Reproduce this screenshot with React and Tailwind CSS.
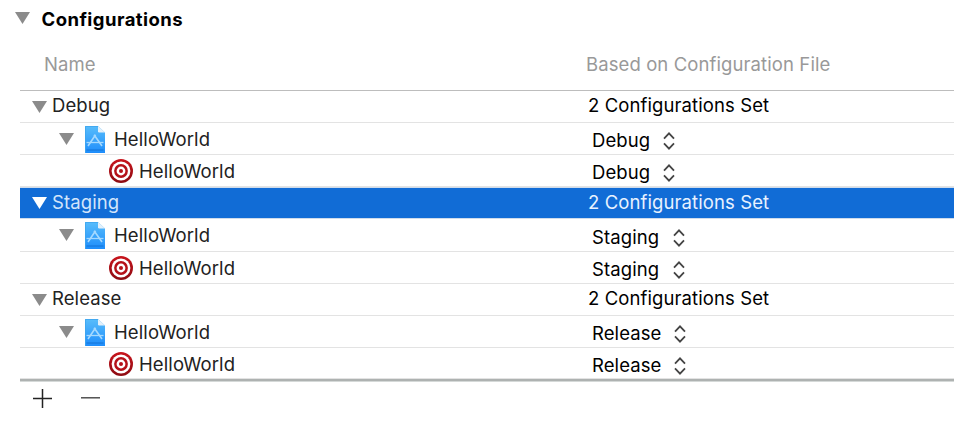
import React from "react";

function Triangle({ className }) {
  return (
    <svg className={`block h-3 w-[15px] shrink-0 ${className}`} viewBox="0 0 15 12" fill="currentColor">
      <path d="M0 0H15L7.5 12Z" />
    </svg>
  );
}

function ProjectIcon() {
  return (
    <svg className="block h-[27px] w-5 shrink-0" viewBox="0 0 20 27">
      <defs>
        <linearGradient id="page" x1="0" y1="0" x2="0" y2="1">
          <stop offset="0" stopColor="#58bdfb" />
          <stop offset="1" stopColor="#1e8dfb" />
        </linearGradient>
      </defs>
      <path d="M0 0H13L20 6.5V27H0Z" fill="url(#page)" />
      <path d="M0.5 27V0.5H13" fill="none" stroke="#3ea5ee" strokeWidth="0.8" />
      <path d="M13 0L20 6.5H14.2Q13 6.5 13 5.2Z" fill="#e3f0fa" />
      <path d="M1.5 24H18.5" stroke="#1272d6" strokeWidth="1" />
      <g stroke="#a5d9ff" fill="none">
        <path d="M3 20L10.6 8.8M9 8.8L17 20" strokeWidth="1.6" />
        <path d="M1.5 16.5H18.5" strokeWidth="1.3" />
      </g>
    </svg>
  );
}

function TargetIcon() {
  return (
    <svg className="block h-6 w-6 shrink-0" viewBox="0 0 24 24">
      <defs>
        <linearGradient id="ring" x1="0" y1="0" x2="0" y2="1">
          <stop offset="0" stopColor="#c9151d" />
          <stop offset="1" stopColor="#8c0b12" />
        </linearGradient>
      </defs>
      <circle cx="12" cy="12" r="12" fill="url(#ring)" />
      <circle cx="12" cy="12" r="9.4" fill="#fff" />
      <circle cx="12" cy="12" r="6.9" fill="#b51119" />
      <circle cx="12" cy="12" r="4.4" fill="#fff" />
      <circle cx="12" cy="12" r="2" fill="#b51119" />
    </svg>
  );
}

function Stepper() {
  return (
    <svg className="block h-[18px] w-3 shrink-0" viewBox="0 0 12 18" fill="none" stroke="#444" strokeWidth="1.8">
      <path d="M1 6.6L6 1.4L11 6.6M1 11.4L6 16.6L11 11.4" />
    </svg>
  );
}

const rows = [
  { kind: "group", name: "Debug", h: "h-8" },
  { kind: "project", name: "HelloWorld", value: "Debug", h: "h-8", place: "gap-[13px] pt-[5px]" },
  { kind: "target", name: "HelloWorld", value: "Debug", h: "h-8", place: "gap-[13px] pt-[5px]" },
  { kind: "group", name: "Staging", selected: true },
  { kind: "project", name: "HelloWorld", value: "Staging", h: "h-[33px]", place: "gap-[14px] pt-1.5" },
  { kind: "target", name: "HelloWorld", value: "Staging", h: "h-8", place: "gap-[14px] pt-[5px]" },
  { kind: "group", name: "Release", h: "h-8" },
  { kind: "project", name: "HelloWorld", value: "Release", h: "h-8", place: "gap-3 pt-[5px]" },
  { kind: "target", name: "HelloWorld", value: "Release", h: "h-[31px]", place: "gap-3 pt-[5px]" },
];

function NameCell({ row }) {
  if (row.kind === "group") {
    return (
      <div className="flex w-[568px] shrink-0 items-start pl-3">
        <Triangle className={row.selected ? "mt-[9px] text-white" : "mt-[10px] text-[#8b8b8b]"} />
        <span className={`ml-[5px] mt-0.5 ${row.selected ? "text-[#d3e5fb]" : "text-[#222]"}`}>{row.name}</span>
      </div>
    );
  }
  if (row.kind === "project") {
    return (
      <div className="flex w-[568px] shrink-0 items-start pl-[39px]">
        <Triangle className="mt-[10px] text-[#8b8b8b]" />
        <div className="ml-[11px] mt-[3px]">
          <ProjectIcon />
        </div>
        <span className="ml-[9px] mt-1 text-[#222]">{row.name}</span>
      </div>
    );
  }
  return (
    <div className="flex w-[568px] shrink-0 items-start pl-[89px]">
      <div className="mt-1">
        <TargetIcon />
      </div>
      <span className="ml-[6px] mt-1 text-[#222]">{row.name}</span>
    </div>
  );
}

function Row({ row }) {
  const tone = row.selected
    ? "h-8 border-t border-b border-t-[#cfdcec] border-b-[#cfdcec] bg-[#116cd6]"
    : `border-b border-[#e3e3e3] ${row.h}`;
  return (
    <div className={`flex items-start overflow-hidden ${tone}`}>
      <NameCell row={row} />
      {row.value ? (
        <div className={`flex items-center pl-1 text-black ${row.place}`}>
          <span>{row.value}</span>
          <Stepper />
        </div>
      ) : (
        <span className={`mt-0.5 ${row.selected ? "text-[#e8f2ff]" : "text-black"}`}>2 Configurations Set</span>
      )}
    </div>
  );
}

export default function App() {
  return (
    <div className="h-[440px] w-[954px] overflow-hidden bg-white font-['Inter',sans-serif] text-[18.5px] leading-[25px] tracking-[0.1px]">
      <div className="flex h-[50px] items-start pl-[15px] pt-[7px]">
        <Triangle className="mt-[5px] text-[#8b8b8b]" />
        <h2 className="ml-[11.5px] font-bold tracking-[0.45px] text-black">Configurations</h2>
      </div>
      <div className="ml-5">
        <div className="flex h-[41px] items-start border-b border-[#bdbdbd] pt-0.5 text-[#999]">
          <span className="w-[566px] shrink-0 pl-6">Name</span>
          <span>Based on Configuration File</span>
        </div>
        {rows.map((row, i) => (
          <Row key={i} row={row} />
        ))}
        <div className="h-[3px] border-b border-[#d5d9d8] bg-[#aeb2b1]" />
        <div className="flex items-start gap-[29px] pl-[13px] pt-[7px]">
          <svg className="h-[19px] w-[19px]" viewBox="0 0 19 19" stroke="#222" strokeWidth="1.5">
            <path d="M9.5 0V19M0 9.5H19" />
          </svg>
          <svg className="h-[19px] w-[19px]" viewBox="0 0 19 19" stroke="#444" strokeWidth="1.4">
            <path d="M0 8.8H19" />
          </svg>
        </div>
      </div>
    </div>
  );
}
